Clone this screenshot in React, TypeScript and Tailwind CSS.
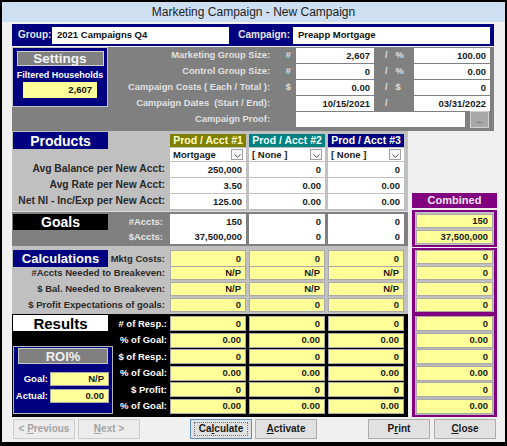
import React from 'react';

type Kind = 'w' | 'y';

const GRID = 'grid grid-cols-[155px_76px_76px_76px] gap-x-[3px]';

const Cell = ({ v = '', kind = 'w', className = '' }: { v?: string; kind?: Kind; className?: string }) => (
  <div
    className={`flex items-center justify-end pr-[4px] text-[9.5px] font-bold leading-none text-[#1a1a1a] ${
      kind === 'y' ? 'border border-[#a9a9a9] bg-[#ffff99]' : 'bg-white'
    } ${className}`}
  >
    {v}
  </div>
);

const Header = ({ children, className }: { children: React.ReactNode; className: string }) => (
  <div className={`mt-[2px] flex h-[13px] items-center justify-center text-[10.5px] font-bold leading-none ${className}`}>
    {children}
  </div>
);

const Drop = ({ v }: { v: string }) => (
  <div className="flex items-center justify-between bg-white pl-[3px] pr-[3px]">
    <span className="text-[9.5px] font-bold leading-none text-[#1a1a1a]">{v}</span>
    <span className="flex h-[11px] w-[12px] items-end justify-center border border-[#a0a0a0] bg-[#f6f6f6] pb-[1px]">
      <svg width="7" height="4" viewBox="0 0 7 4">
        <path d="M0.5 0.5 L3.5 3.2 L6.5 0.5" fill="none" stroke="#555" strokeWidth="1" />
      </svg>
    </span>
  </div>
);

// settings row on the gray panel
const SetRow = ({ label, sym, a, sym2, b }: { label: string; sym: string; a: string; sym2: string; b: string }) => (
  <div className="flex h-[15px] items-center text-[9.3px] font-bold leading-none text-[#e0e0e0]">
    <div className="w-[163px] whitespace-pre pr-[1px] text-right">{label}</div>
    <div className="w-[25px] pr-[5px] text-right">{sym}</div>
    <Cell v={a} className="h-full w-[78px]" />
    <div className="flex w-[40px]">
      <span className="ml-[11px]">/</span>
      <span className="ml-[8px]">{sym2}</span>
    </div>
    <Cell v={b} className="h-full w-[76px]" />
  </div>
);

const Btn = ({ children, off, focus }: { children: React.ReactNode; off?: boolean; focus?: boolean }) => (
  <div
    className={`flex h-[20px] w-[62px] items-center justify-center whitespace-pre border text-[10px] font-bold leading-none ${
      off
        ? 'border-[#cccccc] bg-[#ececec] text-[#a3a3a3]'
        : focus
        ? 'border-[#5a8fc0] bg-[#e1e1e1] text-[#1a1a1a]'
        : 'border-[#adadad] bg-[#e1e1e1] text-[#1a1a1a]'
    }`}
  >
    {children}
  </div>
);

const labelDark = 'whitespace-nowrap pr-[2px] text-right text-[9.5px] font-bold leading-none text-[#2a2a2a]';
const labelProd = 'whitespace-nowrap pr-[2px] text-right text-[10.3px] font-bold leading-none text-[#2a2a2a]';
const labelLight = 'pr-[4px] text-right text-[9.5px] font-bold leading-none text-[#e6e6e6]';

export default function App() {
  const products = [
    ['Avg Balance per New Acct:', '250,000', '0', '0'],
    ['Avg Rate per New Acct:', '3.50', '0.00', '0.00'],
    ['Net NI - Inc/Exp per New Acct:', '125.00', '0.00', '0.00'],
  ];
  const calcs = [
    ['#Accts Needed to Breakeven:', 'N/P', 'N/P', 'N/P', '0'],
    ['$ Bal. Needed to Breakeven:', 'N/P', 'N/P', 'N/P', '0'],
    ['$ Profit Expectations of goals:', '0', '0', '0', '0'],
  ];
  const results = [
    ['# of Resp.:', '0', '0'],
    ['% of Goal:', '0.00', '0.00'],
    ['$ of Resp.:', '0', '0'],
    ['% of Goal:', '0.00', '0.00'],
    ['$ Profit:', '0', '0'],
    ['% of Goal:', '0.00', '0.00'],
  ];

  return (
    <div className="h-[446px] w-[507px] bg-black px-[2px] pb-[4px] pt-[2px] font-['Liberation_Sans',Arial,sans-serif]">
      <div className="flex h-full flex-col bg-[#f0f0f0]">
        {/* title bar */}
        <div className="flex h-[20px] items-center justify-center bg-[#cddff1] text-[12px] text-[#1e1e1e]">
          Marketing Campaign - New Campaign
        </div>

        <div className="flex flex-col pl-[10px] pt-[2px]">
          {/* group / campaign */}
          <div className="flex h-[22px] w-[482px] items-center bg-[#000080] text-[10px] font-bold leading-none text-[#e6e6e6]">
            <div className="w-[40px] pl-[6px]">Group:</div>
            <div className="flex h-[17px] w-[177px] items-center bg-white pl-[5px] text-[9.5px] text-[#111]">2021 Campaigns Q4</div>
            <div className="w-[64px] pr-[3px] text-right">Campaign:</div>
            <div className="flex h-[17px] w-[197px] items-center bg-white pl-[5px] text-[9.5px] text-[#111]">Preapp Mortgage</div>
          </div>

          {/* settings */}
          <div className="mt-[1px] flex h-[84px] w-[482px] bg-[#808080]">
            <div className="flex h-[60px] w-[96px] flex-col items-center border border-[#c4c4c4] bg-[#000080]">
              <div className="mt-[3px] flex h-[15px] w-[87px] items-center justify-center border border-[#d0d0d0] bg-[#808080] text-[13.5px] font-bold leading-none text-[#f4f4f4]">
                Settings
              </div>
              <div className="mt-[4px] text-[9px] font-bold leading-[10px] text-white">Filtered Households</div>
              <div className="mt-[2px] flex h-[16px] w-[74px] items-center justify-end bg-[#ffff99] pr-[5px] text-[9.5px] font-bold leading-none text-[#111]">
                2,607
              </div>
            </div>
            <div className="flex flex-col gap-[1px] pt-[1px]">
              <SetRow label="Marketing Group Size:" sym="#" a="2,607" sym2="%" b="100.00" />
              <SetRow label="Control Group Size:" sym="#" a="0" sym2="%" b="0.00" />
              <SetRow label="Campaign Costs ( Each / Total ):" sym="$" a="0.00" sym2="$" b="0" />
              <SetRow label="Campaign Dates  (Start / End):" sym="" a="10/15/2021" sym2="" b="03/31/2022" />
              <div className="flex h-[15px] items-center text-[9.3px] font-bold leading-none text-[#e0e0e0]">
                <div className="w-[163px] pr-[1px] text-right">Campaign Proof:</div>
                <div className="w-[25px]" />
                <div className="h-full w-[169px] bg-white" />
                <div className="ml-[5px] flex h-[17px] w-[19px] items-end justify-center border border-[#d0d0d0] bg-[#a8a8a8] pb-[3px] text-[7px] leading-none text-[#555]">
                  ...
                </div>
              </div>
            </div>
          </div>

          <div className="flex">
            {/* left block */}
            <div className="flex w-[396px] flex-col">
              {/* products */}
              <div className="flex h-[80px] flex-col bg-[#c0c0c0] pt-[1px]">
                <div className={`${GRID} h-[16px]`}>
                  <div className="pl-[1px]">
                    <div className="flex h-[17px] w-[95px] items-center justify-center bg-[#000080] text-[14px] font-bold leading-none text-white">
                      Products
                    </div>
                  </div>
                  <Header className="bg-[#808000] text-[#ffffcc]">Prod / Acct #1</Header>
                  <Header className="bg-[#008080] text-[#f0ffff]">Prod / Acct #2</Header>
                  <Header className="bg-[#000080] text-white">Prod / Acct #3</Header>
                </div>
                <div className={`${GRID} h-[13px]`}>
                  <div />
                  <Drop v="Mortgage" />
                  <Drop v="[ None ]" />
                  <Drop v="[ None ]" />
                </div>
                <div className="mt-[1px] flex flex-col gap-[1px]">
                  {products.map((r) => (
                    <div key={r[0]} className={`${GRID} h-[15px]`}>
                      <div className={`${labelProd} self-center`}>{r[0]}</div>
                      <Cell v={r[1]} />
                      <Cell v={r[2]} />
                      <Cell v={r[3]} />
                    </div>
                  ))}
                </div>
              </div>

              {/* goals */}
              <div className="flex h-[35px] flex-col gap-[2px] border-t border-[#dcdcdc] bg-[#808080] pt-[2px]">
                <div className={`${GRID} h-[14px]`}>
                  <div className="flex items-center justify-between pl-[1px]">
                    <div className="flex h-[16px] w-[95px] items-center justify-center bg-black text-[14px] font-bold leading-none text-white">
                      Goals
                    </div>
                    <div className={labelLight}>#Accts:</div>
                  </div>
                  <Cell v="150" />
                  <Cell v="0" />
                  <Cell v="0" />
                </div>
                <div className={`${GRID} h-[14px]`}>
                  <div className={`${labelLight} self-center`}>$Accts:</div>
                  <Cell v="37,500,000" />
                  <Cell v="0" />
                  <Cell v="0" />
                </div>
              </div>

              {/* calculations */}
              <div className="flex h-[68px] flex-col gap-[2px] bg-[#c0c0c0] pt-[4px]">
                <div className={`${GRID} h-[14px]`}>
                  <div className="flex items-center justify-between pl-[1px]">
                    <div className="flex h-[17px] w-[95px] items-center justify-center bg-[#000080] text-[13px] font-bold leading-none text-white">
                      Calculations
                    </div>
                    <div className={labelDark}>Mktg Costs:</div>
                  </div>
                  <Cell kind="y" v="0" />
                  <Cell kind="y" v="0" />
                  <Cell kind="y" v="0" />
                </div>
                {calcs.map((r) => (
                  <div key={r[0]} className={`${GRID} h-[14px]`}>
                    <div className={`${labelDark} self-center`}>{r[0]}</div>
                    <Cell kind="y" v={r[1]} />
                    <Cell kind="y" v={r[2]} />
                    <Cell kind="y" v={r[3]} />
                  </div>
                ))}
              </div>

              {/* results */}
              <div className="flex h-[103px] bg-black">
                <div className="flex w-[101px] flex-col pl-[1px] pt-[1px]">
                  <div className="flex h-[16px] w-[95px] items-center justify-center bg-white text-[15px] font-bold leading-none text-black">
                    Results
                  </div>
                  <div className="mt-[15px] flex h-[68px] w-[100px] flex-col border border-[#b8b8b8] bg-[#000080]">
                    <div className="ml-[4px] mt-[1px] flex h-[16px] w-[90px] items-center justify-center border border-[#c8c8c8] bg-[#808080] text-[13px] font-bold leading-none text-[#f0f0f0]">
                      ROI%
                    </div>
                    <div className="mt-[8px] flex h-[14px] items-center">
                      <div className="w-[36px] pr-[2px] text-right text-[9.5px] font-bold leading-none text-white">Goal:</div>
                      <Cell kind="y" v="N/P" className="h-full w-[59px]" />
                    </div>
                    <div className="mt-[3px] flex h-[14px] items-center">
                      <div className="w-[36px] pr-[2px] text-right text-[9.5px] font-bold leading-none text-white">Actual:</div>
                      <Cell kind="y" v="0.00" className="h-full w-[59px]" />
                    </div>
                  </div>
                </div>
                <div className="flex w-[54px] flex-col gap-[1.5px] pt-[2px]">
                  {results.map((r, i) => (
                    <div key={i} className="flex h-[15px] items-center justify-end whitespace-nowrap text-[9.5px] font-bold leading-none text-white">
                      {r[0]}
                    </div>
                  ))}
                </div>
                <div className="ml-[3px] flex flex-col gap-[1.5px] pt-[2px]">
                  {results.map((r, i) => (
                    <div key={i} className="grid h-[15px] grid-cols-[76px_76px_76px] gap-x-[3px]">
                      <Cell kind="y" v={r[1]} />
                      <Cell kind="y" v={r[2]} />
                      <Cell kind="y" v={r[2]} />
                    </div>
                  ))}
                </div>
              </div>
            </div>

            {/* combined column */}
            <div className="ml-[4px] flex w-[85px] flex-col">
              <div className="h-[62px]" />
              <div className="flex h-[15px] items-center justify-center bg-[#800080] text-[11px] font-bold leading-none text-[#f4e8f4]">
                Combined
              </div>
              <div className="mt-[2px] flex h-[37px] flex-col gap-[2px] border-x-[3px] border-y-2 border-[#800080] bg-[#c0c0c0] px-[1px] pt-[2px]">
                <Cell kind="y" v="150" className="h-[14px]" />
                <Cell kind="y" v="37,500,000" className="h-[14px]" />
              </div>
              <div className="mt-[1px] flex h-[66px] flex-col gap-[2px] border-x-[3px] border-y-2 border-[#800080] bg-[#c0c0c0] px-[1px]">
                <Cell kind="y" v="0" className="h-[14px]" />
                {calcs.map((r) => (
                  <Cell key={r[0]} kind="y" v={r[4]} className="h-[14px]" />
                ))}
              </div>
              <div className="flex h-[103px] flex-col gap-[1.5px] border-x-[3px] border-y-2 border-[#800080] bg-[#b8b8b8] px-[1px]">
                {results.map((r, i) => (
                  <Cell key={i} kind="y" v={r[2]} className="h-[15px]" />
                ))}
              </div>
            </div>
          </div>

          {/* buttons */}
          <div className="mt-[2px] flex pl-[1px]">
            <Btn off>
              {'< '}
              <span className="underline">P</span>revious
            </Btn>
            <div className="ml-[3px]">
              <Btn off>
                <span className="underline">N</span>
                {'ext >'}
              </Btn>
            </div>
            <div className="ml-[50px]">
              <Btn focus>
                <span className="flex h-[14px] w-[54px] items-center justify-center border border-dotted border-[#777]">
                  Ca<span className="underline">l</span>culate
                </span>
              </Btn>
            </div>
            <div className="ml-[3px]">
              <Btn>
                <span className="underline">A</span>ctivate
              </Btn>
            </div>
            <div className="ml-[51px]">
              <Btn>
                P<span className="underline">r</span>int
              </Btn>
            </div>
            <div className="ml-[4px]">
              <Btn>
                <span className="underline">C</span>lose
              </Btn>
            </div>
          </div>
        </div>
      </div>
    </div>
  );
}
